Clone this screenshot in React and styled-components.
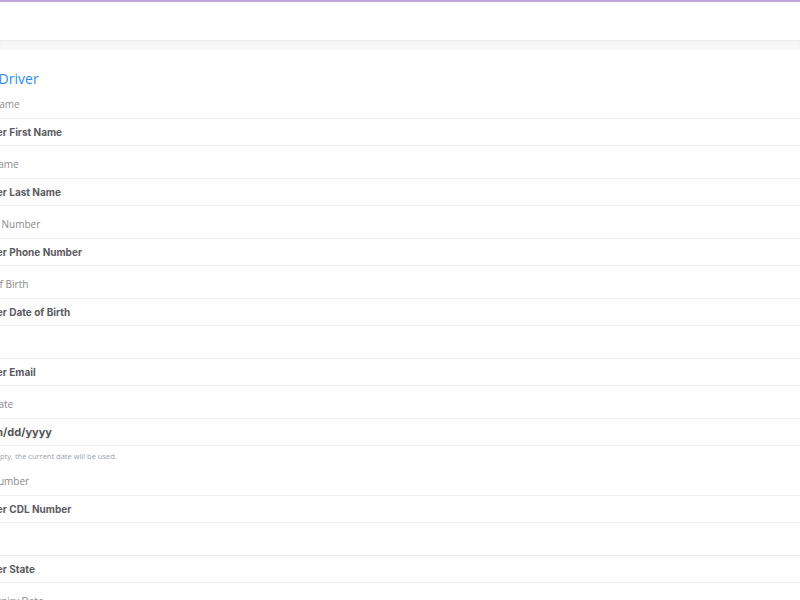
import React from "react";
import styled, { createGlobalStyle } from "styled-components";

const Global = createGlobalStyle`
  html, body { margin: 0; padding: 0; background: #fff; overflow: hidden; }
  body { font-family: "Open Sans", "Liberation Sans", sans-serif; }
`;

const Page = styled.div`
  width: 800px;
  height: 600px;
  overflow: hidden;
  display: flex;
  flex-direction: column;
`;

const TopBar = styled.header`
  height: 38px;
  flex: none;
  border-top: 2px solid #bfa3da;
  background: #fff;
`;

const Band = styled.div`
  height: 10px;
  flex: none;
  background: #f7f7f7;
  box-shadow: inset 0 1px 2px rgba(0, 0, 0, 0.06);
`;

const Card = styled.main`
  flex: 1;
  background: #fff;
  margin-left: -31px;
  padding: 17px 0 0 0;
  display: flex;
  flex-direction: column;
`;

const Title = styled.h2`
  margin: 0 0 5px 0;
  font-family: "Open Sans", sans-serif;
  font-weight: 400;
  font-size: 14px;
  line-height: 24px;
  color: #2a8cf2;
`;

const Group = styled.div`
  display: flex;
  flex-direction: column;
  margin-bottom: 10px;
`;

const Label = styled.label`
  font-family: "Open Sans", sans-serif;
  font-size: 10px;
  line-height: 16px;
  color: #8a8a8a;
  margin-bottom: 6px;
`;

const Input = styled.input`
  box-sizing: border-box;
  width: 900px;
  height: 28px;
  padding: 0 12px;
  border: 1px solid #ececec;
  border-width: 1px 0;
  background: #fff;
  font-family: "Inter", "Open Sans", sans-serif;
  font-weight: 700;
  font-size: 10px;
  color: #555;
  outline: none;
  &::placeholder { color: #5a5a5f; opacity: 1; }
`;

const DateText = styled.div`
  box-sizing: border-box;
  width: 900px;
  height: 28px;
  padding: 0 14px;
  border: 1px solid #ececec;
  border-width: 1px 0;
  display: flex;
  align-items: center;
  font-family: "Inter", "Open Sans", sans-serif;
  font-weight: 700;
  font-size: 11px;
  color: #555;
`;

const Help = styled.small`
  font-family: "Open Sans", sans-serif;
  font-size: 7.5px;
  line-height: 12px;
  margin-top: 4px;
  margin-bottom: 1px;
  color: #98a2ad;
`;

const fields = [
  { label: "First Name", ph: "Enter First Name" },
  { label: "Last Name", ph: "Enter Last Name" },
  { label: "Phone Number", ph: "Enter Phone Number" },
  { label: "Date of Birth", ph: "Enter Date of Birth" },
  { label: "Email", ph: "Enter Email" },
];

const fields2 = [
  { label: "CDL Number", ph: "Enter CDL Number" },
  { label: "State", ph: "Enter State" },
  { label: "CDL Expiry Date", ph: "mm/dd/yyyy" },
];

export default function App() {
  return (
    <>
      <Global />
      <Page>
        <TopBar />
        <Band />
        <Card>
          <Title>Add Driver</Title>
          {fields.map((f) => (
            <Group key={f.label}>
              <Label>{f.label}</Label>
              <Input placeholder={f.ph} />
            </Group>
          ))}
          <Group>
            <Label>Hire Date</Label>
            <DateText>mm/dd/yyyy</DateText>
            <Help>If left empty, the current date will be used.</Help>
          </Group>
          {fields2.map((f) => (
            <Group key={f.label}>
              <Label>{f.label}</Label>
              <Input placeholder={f.ph} />
            </Group>
          ))}
        </Card>
      </Page>
    </>
  );
}
